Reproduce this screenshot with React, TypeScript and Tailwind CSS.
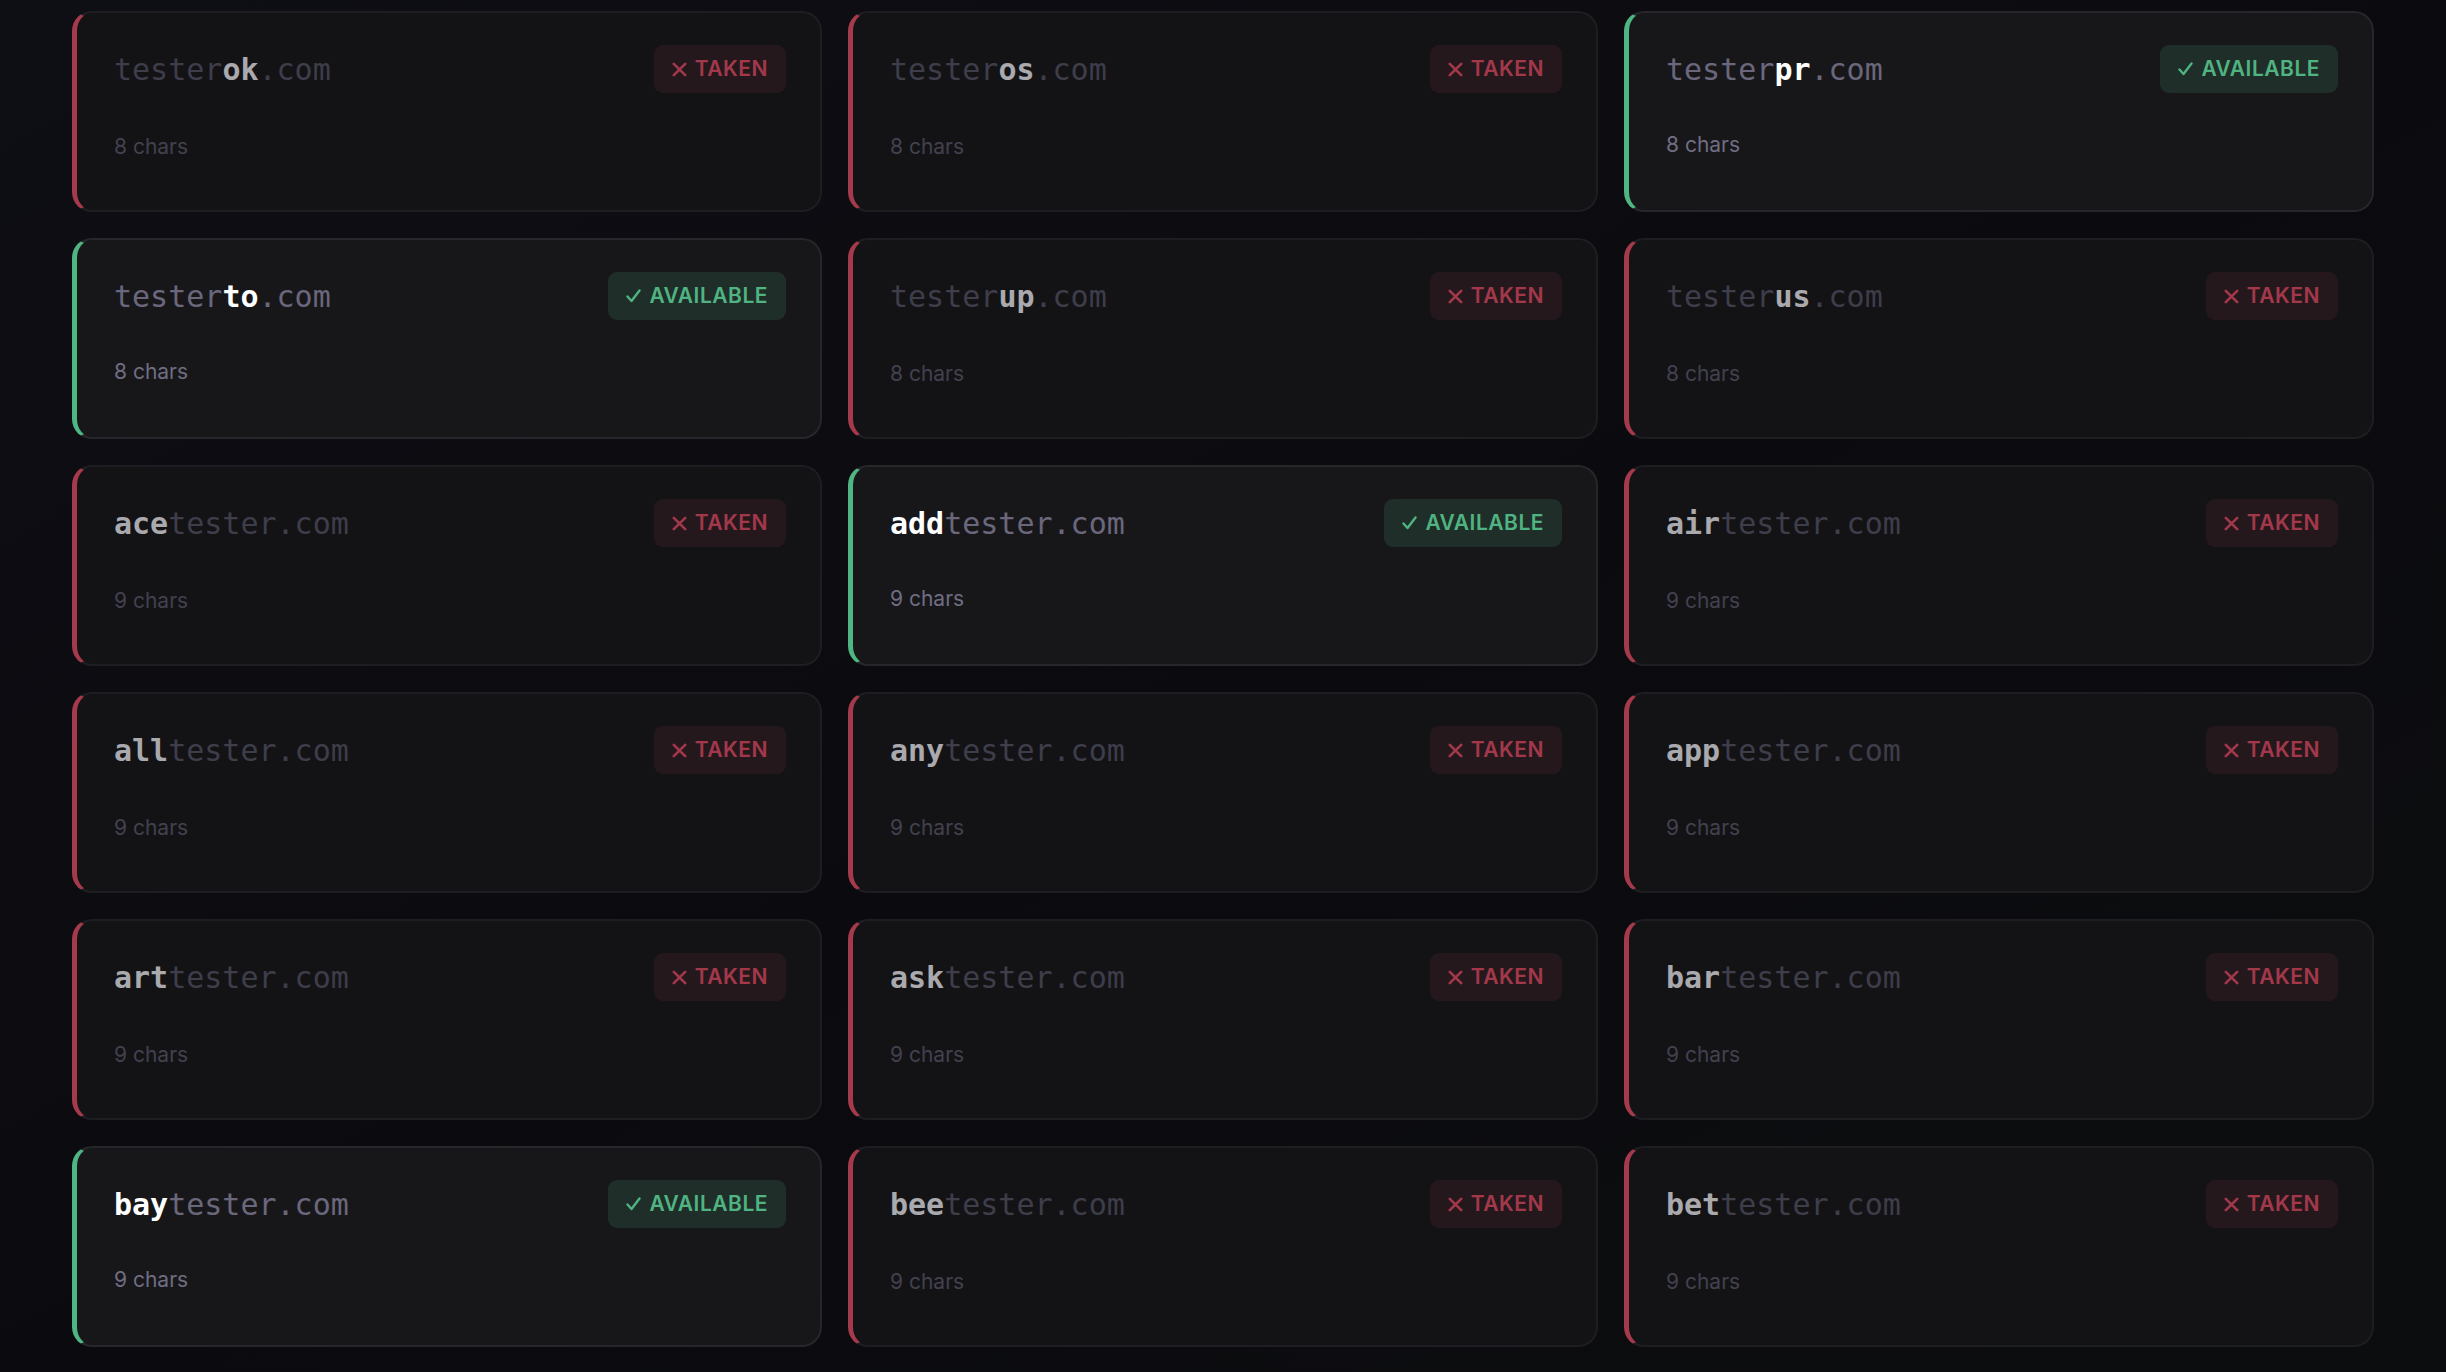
type Domain = {
  prefix: string;
  bold: string;
  suffix: string;
  chars: number;
  available: boolean;
};

const domains: Domain[] = [
  { prefix: "tester", bold: "ok", suffix: ".com", chars: 8, available: false },
  { prefix: "tester", bold: "os", suffix: ".com", chars: 8, available: false },
  { prefix: "tester", bold: "pr", suffix: ".com", chars: 8, available: true },
  { prefix: "tester", bold: "to", suffix: ".com", chars: 8, available: true },
  { prefix: "tester", bold: "up", suffix: ".com", chars: 8, available: false },
  { prefix: "tester", bold: "us", suffix: ".com", chars: 8, available: false },
  { prefix: "", bold: "ace", suffix: "tester.com", chars: 9, available: false },
  { prefix: "", bold: "add", suffix: "tester.com", chars: 9, available: true },
  { prefix: "", bold: "air", suffix: "tester.com", chars: 9, available: false },
  { prefix: "", bold: "all", suffix: "tester.com", chars: 9, available: false },
  { prefix: "", bold: "any", suffix: "tester.com", chars: 9, available: false },
  { prefix: "", bold: "app", suffix: "tester.com", chars: 9, available: false },
  { prefix: "", bold: "art", suffix: "tester.com", chars: 9, available: false },
  { prefix: "", bold: "ask", suffix: "tester.com", chars: 9, available: false },
  { prefix: "", bold: "bar", suffix: "tester.com", chars: 9, available: false },
  { prefix: "", bold: "bay", suffix: "tester.com", chars: 9, available: true },
  { prefix: "", bold: "bee", suffix: "tester.com", chars: 9, available: false },
  { prefix: "", bold: "bet", suffix: "tester.com", chars: 9, available: false },
];

function CrossIcon() {
  return (
    <svg width="15" height="15" viewBox="0 0 15 15" fill="none" stroke="currentColor" strokeWidth="2.6" strokeLinecap="round">
      <path d="M1.8 1.8 L13.2 13.2 M13.2 1.8 L1.8 13.2" />
    </svg>
  );
}

function CheckIcon() {
  return (
    <svg width="15" height="14" viewBox="0 0 15 14" fill="none" stroke="currentColor" strokeWidth="2.4" strokeLinecap="round" strokeLinejoin="round">
      <path d="M1.5 7.5 L5.5 12 L13.5 1.5" />
    </svg>
  );
}

function DomainCard({ d }: { d: Domain }) {
  const ok = d.available;
  return (
    <div
      className={`h-[201px] rounded-[20px] border-2 border-l-[5px] pl-[37px] pr-[34px] pt-[32px] ${
        ok ? "bg-[#17171a] border-[#27272b] border-l-[#4fb583]" : "bg-[#131316] border-[#1e1e22] border-l-[#a53a4c]"
      }`}
    >
      <div className="flex items-center justify-between h-[48px]">
        <div className="text-[30px] leading-[35px] font-['DejaVu_Sans_Mono',monospace] whitespace-nowrap">
          <span className={ok ? "text-[#6a677d]" : "text-[#3e3d4a]"}>{d.prefix}</span>
          <span className={`font-bold ${ok ? "text-white" : "text-[#a9a9ae]"}`}>{d.bold}</span>
          <span className={ok ? "text-[#6a677d]" : "text-[#3e3d4a]"}>{d.suffix}</span>
        </div>
        <div
          className={`flex items-center gap-[8px] h-[48px] px-[18px] rounded-[9px] text-[21px] font-semibold tracking-[0.5px] font-['Inter',sans-serif] ${
            ok ? "bg-[#1f2e28] text-[#4fb382]" : "bg-[#25181d] text-[#a3384b]"
          }`}
        >
          {ok ? <CheckIcon /> : <CrossIcon />}
          <span>{ok ? "AVAILABLE" : "TAKEN"}</span>
        </div>
      </div>
      <div
        className={`text-[21px] leading-[28px] font-['Inter',sans-serif] ${
          ok ? "mt-[38px] text-[#706d83]" : "mt-[40px] text-[#42414e]"
        }`}
      >
        {d.chars} chars
      </div>
    </div>
  );
}

export default function App() {
  return (
    <div className="min-h-screen h-[1372px] overflow-hidden bg-gradient-to-br from-[#0e0e15] via-[#0b0b0f] to-[#0c0d0f] px-[72px] pt-[11px]">
      <div className="grid grid-cols-3 gap-x-[26px] gap-y-[26px]">
        {domains.map((d) => (
          <DomainCard key={d.prefix + d.bold + d.suffix} d={d} />
        ))}
      </div>
    </div>
  );
}
